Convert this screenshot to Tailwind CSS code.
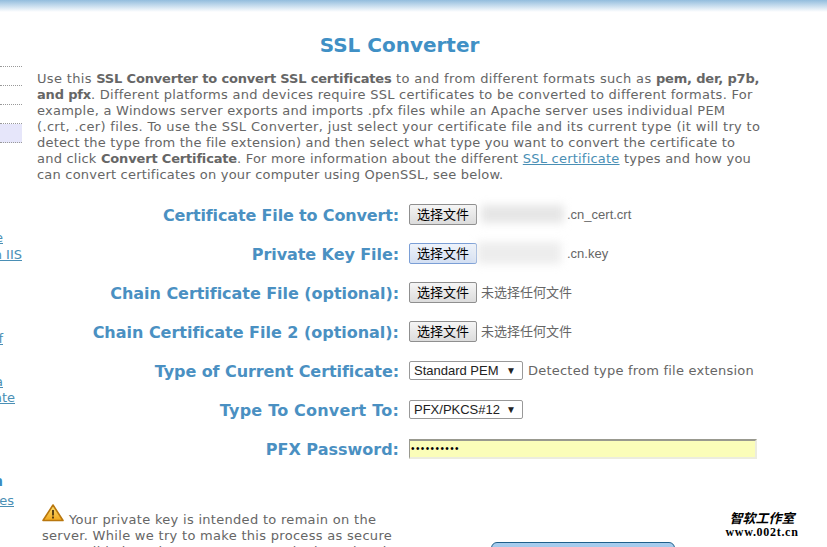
<!DOCTYPE html>
<html><head><meta charset="utf-8"><script src="https://cdn.jsdelivr.net/npm/@tailwindcss/browser@4"></script></head>
<body class="bg-white overflow-hidden">
<div class="relative w-[827px] h-[547px] overflow-hidden font-['DejaVu_Sans','Noto_Sans_CJK_SC',sans-serif] text-[13px] leading-4 text-[#666] bg-white">
  <div class="h-3 bg-gradient-to-b from-[#93bddd] to-white"></div>
  <div class="flex">
    <aside class="w-[22px] shrink-0 overflow-hidden text-[#4a8fb5]">
      <div class="h-[55px] border-b border-dotted border-[#999]"></div>
      <div class="h-[19px] border-b border-dotted border-[#999]"></div>
      <div class="h-[19px] border-b border-dotted border-[#999]"></div>
      <div class="h-[19px] border-b border-dotted border-[#999]"></div>
      <div class="h-[19px] border-b border-dotted border-[#999] bg-[#e6e6fa]"></div>
      <div class="h-[87px]"></div>
      <div class="w-[3px] flex justify-end underline whitespace-nowrap h-4">e</div>
      <div class="h-px"></div>
      <div class="flex justify-end underline whitespace-nowrap h-4">on IIS</div>
      <div class="h-[68px]"></div>
      <div class="w-[3px] flex justify-end underline whitespace-nowrap h-4">of</div>
      <div class="h-[27px]"></div>
      <div class="w-[3px] flex justify-end underline whitespace-nowrap h-4">a</div>
      <div class="w-[15px] flex justify-end underline whitespace-nowrap h-4">icate</div>
      <div class="h-[65px]"></div>
      <div class="w-[3px] flex justify-end font-bold text-[#3d8bbf] text-sm h-4">n</div>
      <div class="h-[6px]"></div>
      <div class="w-[14px] flex justify-end underline whitespace-nowrap h-4">Types</div>
    </aside>
    <main class="w-[740px] pl-[15px]">
      <h1 class="mt-[20px] text-center text-[20px] leading-[26px] font-bold text-[#4090c5]">SSL Converter</h1>
      <div class="mt-[13px] w-[740px] whitespace-nowrap">
        <p class="tracking-[.33px]">Use this <b class="font-bold tracking-[-.17px]">SSL Converter to convert SSL certificates</b> to and from different formats such as <b class="font-bold tracking-[-.17px]">pem, der, p7b,</b></p>
        <p class="tracking-[.26px]"><b class="font-bold tracking-[-.17px]">and pfx</b>. Different platforms and devices require SSL certificates to be converted to different formats. For</p>
        <p class="tracking-[.25px]">example, a Windows server exports and imports .pfx files while an Apache server uses individual PEM</p>
        <p class="tracking-[.34px]">(.crt, .cer) files. To use the SSL Converter, just select your certificate file and its current type (it will try to</p>
        <p class="tracking-[.19px]">detect the type from the file extension) and then select what type you want to convert the certificate to</p>
        <p class="tracking-[.22px]">and click <b class="font-bold tracking-[-.17px]">Convert Certificate</b>. For more information about the different <a class="underline text-[#4a8fb5]">SSL certificate</a> types and how you</p>
        <p class="tracking-[.21px]">can convert certificates on your computer using OpenSSL, see below.</p>
      </div>
      <div class="mt-[13px] grid grid-cols-[362px_1fr] gap-x-[10px] auto-rows-[39px] items-center font-['Liberation_Sans','Noto_Sans_CJK_SC',sans-serif] text-[13px] text-[#666]">
        <label class="text-right font-['DejaVu_Sans'] font-bold text-[16px] tracking-[-.15px] text-[#4a90c2]">Certificate File to Convert:</label>
        <div class="flex items-center relative -translate-y-px"><button class="w-[68px] h-[21px] bg-gradient-to-b from-[#f5f5f5] to-[#dcdcdc] border border-[#8f8f8f] rounded-[2px] text-[13px] leading-none text-black">选择文件</button><span class="ml-[90px]">.cn_cert.crt</span><div class="absolute left-[72px] top-[1px] w-[83px] h-[18px] bg-[#e6e6e6] blur-[4px]"></div></div>
        <label class="text-right font-['DejaVu_Sans'] font-bold text-[16px] tracking-[-.08px] text-[#4a90c2]">Private Key File:</label>
        <div class="flex items-center relative -translate-y-px"><button class="w-[68px] h-[21px] bg-gradient-to-b from-[#eef3fb] to-[#d3dff2] border border-[#7a9ed6] rounded-[2px] text-[13px] leading-none text-black">选择文件</button><span class="ml-[90px]">.cn.key</span><div class="absolute left-[68px] -top-[1px] w-[84px] h-[22px] bg-[#ededed] blur-[4px]"></div></div>
        <label class="text-right font-['DejaVu_Sans'] font-bold text-[16px] tracking-[-.05px] text-[#4a90c2]">Chain Certificate File (optional):</label>
        <div class="flex items-center -translate-y-px"><button class="w-[68px] h-[21px] bg-gradient-to-b from-[#f5f5f5] to-[#dcdcdc] border border-[#8f8f8f] rounded-[2px] text-[13px] leading-none text-black">选择文件</button><span class="ml-1 text-[13px]">未选择任何文件</span></div>
        <label class="text-right font-['DejaVu_Sans'] font-bold text-[16px] tracking-[-.02px] text-[#4a90c2]">Chain Certificate File 2 (optional):</label>
        <div class="flex items-center -translate-y-px"><button class="w-[68px] h-[21px] bg-gradient-to-b from-[#f5f5f5] to-[#dcdcdc] border border-[#8f8f8f] rounded-[2px] text-[13px] leading-none text-black">选择文件</button><span class="ml-1 text-[13px]">未选择任何文件</span></div>
        <label class="text-right font-['DejaVu_Sans'] font-bold text-[16px] tracking-[-.08px] text-[#4a90c2]">Type of Current Certificate:</label>
        <div class="flex items-center -translate-y-px"><div class="w-[114px] h-[19px] border border-[#999] rounded-[2px] bg-white flex items-center justify-between pl-1 pr-[6px] text-[13px] text-[#222]"><span>Standard PEM</span><span class="text-[10px]">▼</span></div><span class="ml-[5px] font-['DejaVu_Sans'] text-[13px] tracking-[.22px]">Detected type from file extension</span></div>
        <label class="text-right font-['DejaVu_Sans'] font-bold text-[16px] tracking-[.2px] text-[#4a90c2]">Type To Convert To:</label>
        <div class="flex items-center -translate-y-px"><div class="w-[114px] h-[19px] border border-[#999] rounded-[2px] bg-white flex items-center justify-between pl-1 pr-[6px] text-[13px] text-[#222]"><span>PFX/PKCS#12</span><span class="text-[10px]">▼</span></div></div>
        <label class="text-right font-['DejaVu_Sans'] font-bold text-[16px] text-[#4a90c2]">PFX Password:</label>
        <div class="w-[348px] h-5 -translate-y-px bg-[#fbfdb9] border-t-2 border-l border-t-[#99998f] border-l-[#99998f] border-b-2 border-r-2 border-b-[#ececdf] border-r-[#ececdf] flex items-center pl-[1px] text-[10px] tracking-[1.4px] text-black leading-none">••••••••••</div>
      </div>
      <div class="mt-[35px] ml-[5px] flex items-start justify-between w-[633px]">
        <p class="w-[365px] tracking-[.3px]"><svg class="inline-block align-[2px] mr-[5px]" width="22" height="18" viewBox="0 0 22 18"><defs><linearGradient id="w" x1="0" y1="0" x2="0" y2="1"><stop offset="0" stop-color="#fbe27a"/><stop offset="1" stop-color="#f2a81c"/></linearGradient></defs><path d="M11 1 L21 16.5 H1 Z" fill="url(#w)" stroke="#b9770e" stroke-width="1.6" stroke-linejoin="round"/><rect x="10.1" y="6" width="1.8" height="5.5" fill="#4a3410"/><rect x="10.1" y="12.5" width="1.8" height="2" fill="#4a3410"/></svg>Your private key is intended to remain on the server. While we try to make this process as secure as possible by using SSL to encrypt the key when it</p>
        <button class="mt-[38px] w-[184px] h-10 rounded-t-[6px] bg-gradient-to-b from-[#a8cdee] to-[#7fb0de] border border-[#1f5f8b]"></button>
      </div>
    </main>
  </div>
  <div class="absolute left-[717px] top-[510px] w-[90px] text-center text-black font-bold">
    <div class="text-[13px] leading-[16px] italic font-['Noto_Sans_CJK_SC']">智软工作室</div>
    <div class="text-[12px] leading-[13px] font-['Liberation_Serif'] tracking-[.7px]">www.002t.cn</div>
  </div>
</div>
</body></html>
